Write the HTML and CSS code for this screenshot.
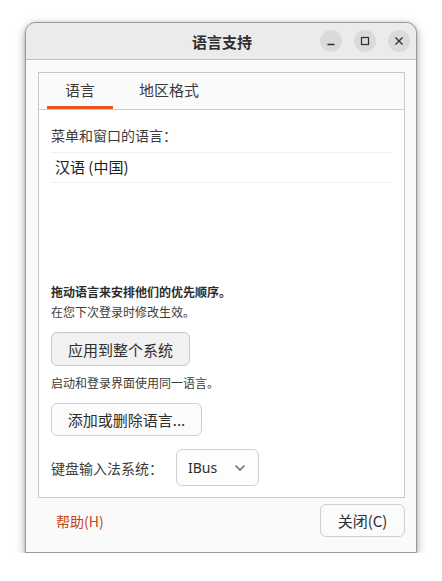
FILE: index.html
```html
<!DOCTYPE html>
<html lang="zh-CN">
<head>
<meta charset="utf-8">
<title>语言支持</title>
<link rel="stylesheet" href="styles.css">
</head>
<body>
<div class="window">
  <div class="titlebar">
    <div class="title">语言支持</div>
    <div class="controls">
      <span class="ctl"><svg width="22" height="22" viewBox="0 0 22 22"><path d="M7.5 14.5h7" stroke="#2e2e2e" stroke-width="1.3" fill="none"/></svg></span>
      <span class="ctl"><svg width="22" height="22" viewBox="0 0 22 22"><rect x="7.5" y="7.5" width="7" height="7" stroke="#2e2e2e" stroke-width="1.2" fill="none"/></svg></span>
      <span class="ctl"><svg width="22" height="22" viewBox="0 0 22 22"><path d="M7.5 7.5l7 7M14.5 7.5l-7 7" stroke="#2e2e2e" stroke-width="1.3" fill="none"/></svg></span>
    </div>
  </div>
  <div class="body">
    <div class="notebook">
      <div class="tabs">
        <div class="tab active">语言</div>
        <div class="tab">地区格式</div>
      </div>
      <div class="page">
        <div class="label">菜单和窗口的语言：</div>
        <div class="list">
          <div class="item">汉语 (中国)</div>
        </div>
        <div class="hint bold">拖动语言来安排他们的优先顺序。</div>
        <div class="hint">在您下次登录时修改生效。</div>
        <button class="btn btn-apply">应用到整个系统</button>
        <div class="hint hint-after">启动和登录界面使用同一语言。</div>
        <button class="btn btn-add">添加或删除语言...</button>
        <div class="kbd-row">
          <span class="label">键盘输入法系统：</span>
          <div class="combo">
            <span class="combo-text">IBus</span>
            <svg width="12" height="8" viewBox="0 0 12 8"><path d="M1.5 1.5l4.5 4.5 4.5-4.5" stroke="#5a5a5a" stroke-width="1.3" fill="none"/></svg>
          </div>
        </div>
      </div>
    </div>
    <div class="footer">
      <span class="help">帮助(H)</span>
      <button class="btn btn-close">关闭(C)</button>
    </div>
  </div>
</div>
</body>
</html>
```
FILE: styles.css
```css
* { box-sizing: border-box; }
html, body { margin: 0; padding: 0; background: #ffffff; }
body {
  font-family: "Noto Sans CJK SC", "Noto Sans", sans-serif;
  color: #3a3a3a;
}
.window {
  margin: 22px 0 0 25px;
  width: 392px;
  height: 531px;
  border: 1px solid #9a9a9a;
  border-radius: 11px 11px 0 0;
  background: #fafafa;
  box-shadow: 0 3px 10px rgba(0,0,0,0.35), 0 0 2px rgba(0,0,0,0.2);
  display: flex;
  flex-direction: column;
  overflow: hidden;
}
.titlebar {
  height: 37px;
  background: #ebebeb;
  border-bottom: 1px solid #c2c2c2;
  display: flex;
  align-items: center;
  justify-content: center;
  position: relative;
  flex: none;
}
.title {
  font-size: 15px;
  font-weight: bold;
  color: #2f2f2f;
  margin-left: 2px;
}
.controls {
  position: absolute;
  right: 6px;
  top: 7px;
  display: flex;
  gap: 12px;
}
.ctl {
  width: 22px;
  height: 22px;
  border-radius: 50%;
  background: #dadada;
  display: block;
}
.ctl svg { display: block; }
.body {
  flex: 1;
  padding: 12px 11px 0 12px;
  display: flex;
  flex-direction: column;
}
.notebook {
  border: 1px solid #c9c9c9;
  background: #ffffff;
}
.tabs {
  display: flex;
  gap: 8px;
  padding-left: 8px;
  background: #fafafa;
  border-bottom: 1px solid #cdcdcd;
  height: 37px;
}
.tab {
  padding: 0 18px;
  font-size: 15px;
  color: #3a3a3a;
  line-height: 33px;
  border-bottom: 3px solid transparent;
}
.tab.active {
  border-bottom-color: #e95420;
}
.page {
  padding: 14px 12px 11px 12px;
  display: flex;
  flex-direction: column;
  align-items: flex-start;
}
.label {
  font-size: 14px;
  line-height: 22px;
  color: #3c3c3c;
}
.list {
  align-self: stretch;
  margin-top: 6px;
  height: 130px;
  border-top: 1px solid #f0f0f0;
}
.item {
  height: 30px;
  line-height: 27px;
  padding-left: 4px;
  font-size: 15px;
  color: #1c1c1c;
  border-bottom: 1px solid #f0f0f0;
}
.hint {
  font-size: 12px;
  line-height: 20px;
  color: #3c3c3c;
}
.hint.bold { font-weight: bold; color: #2c2c2c; }
.btn {
  font-family: "Noto Sans CJK SC", "Noto Sans", sans-serif;
  font-size: 15px;
  color: #2e2e2e;
  border: 1px solid #cfcfcf;
  border-radius: 6px;
  background: #fbfbfb;
  padding: 0;
}
.btn-apply {
  margin-top: 10px;
  width: 139px;
  height: 34px;
  background: #f1f1f1;
  border-color: #c8c8c8;
}
.hint-after { margin-top: 7px; }
.btn-add {
  margin-top: 10px;
  width: 151px;
  height: 33px;
}
.kbd-row {
  margin-top: 13px;
  display: flex;
  align-items: center;
}
.kbd-row .label { width: 125px; }
.combo {
  width: 83px;
  height: 37px;
  border: 1px solid #d0d0d0;
  border-radius: 6px;
  background: #fdfdfd;
  display: flex;
  align-items: center;
  justify-content: space-between;
  padding: 0 12px 0 11px;
}
.combo-text {
  font-family: "Noto Sans", sans-serif;
  font-size: 14px;
  color: #2e2e2e;
}
.combo svg { display: block; margin-top: 1px; }
.footer {
  display: flex;
  justify-content: space-between;
  align-items: center;
  margin-top: 6px;
}
.help {
  font-size: 14px;
  color: #c4441a;
  margin-left: 18px;
}
.btn-close {
  width: 85px;
  height: 33px;
}
```
